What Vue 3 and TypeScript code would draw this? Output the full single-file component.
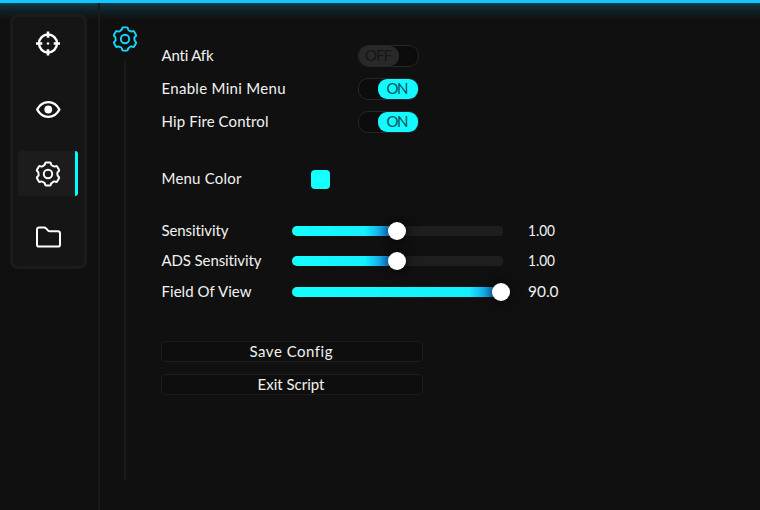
<script setup lang="ts">
import { ref } from 'vue'

interface Toggle { label: string; on: boolean; width: number }
interface Slider { label: string; value: string; fill: number; width: number }

const toggles = ref<Toggle[]>([
  { label: 'Anti Afk', on: false, width: 52 },
  { label: 'Enable Mini Menu', on: true, width: 124 },
  { label: 'Hip Fire Control', on: true, width: 107 },
])
const sliders: Slider[] = [
  { label: 'Sensitivity', value: '1.00', fill: 105.3, width: 67 },
  { label: 'ADS Sensitivity', value: '1.00', fill: 105.3, width: 100 },
  { label: 'Field Of View', value: '90.0', fill: 209, width: 90 },
]
const actions = [
  { label: 'Save Config', width: 83 },
  { label: 'Exit Script', width: 67 },
]

function gearPath(): string {
  const turn = (x: number, y: number, k: number): string => {
    const a = (k * Math.PI) / 3
    return `${(x * Math.cos(a) - y * Math.sin(a)).toFixed(2)} ${(x * Math.sin(a) + y * Math.cos(a)).toFixed(2)}`
  }
  let d = ''
  for (let k = 0; k < 6; k++) {
    const p = (x: number, y: number) => turn(x, y, k)
    d += `${k ? 'L' : 'M'}${p(-3.1, -9.5)}L${p(-2.9, -10.7)}Q${p(-2.8, -11.6)} ${p(-1.9, -11.6)}L${p(1.9, -11.6)}Q${p(2.8, -11.6)} ${p(2.9, -10.7)}L${p(3.1, -9.5)}Q${p(3.5, -8.4)} ${p(4.7, -8.15)}`
  }
  return d + 'Z'
}
const gear = gearPath()
</script>

<template>
  <div class="window">
    <aside class="side">
      <nav class="nav">
        <button class="item">
          <svg viewBox="-13 -12.5 26 26" class="icon">
            <circle r="9" stroke-width="2.4" />
            <path class="ticks" d="M0-12v6.3M0 12V5.7M-12 0h6.3M12 0H5.7" />
            <circle r="1.3" class="solid" />
          </svg>
        </button>
        <button class="item">
          <svg viewBox="-13.3 -13.5 26 26" class="icon eye">
            <path d="M-11.1 0C-6-9.8 6-9.8 11.1 0C6 9.8-6 9.8-11.1 0Z" />
            <circle r="3.9" class="solid" />
          </svg>
        </button>
        <button class="item active">
          <svg viewBox="-13 -13 26 26" class="icon"><path :d="gear" /><circle r="4.2" /></svg>
        </button>
        <button class="item">
          <svg viewBox="-13.5 -13 26 26" class="icon">
            <path d="M-11.5-7.4Q-11.5-9.6-9.3-9.6H-4.5Q-3.2-9.6-2.4-8.7L-.4-6.4Q.2-5.7 1.2-5.7H9.3Q11.5-5.7 11.5-3.5V7.4Q11.5 9.6 9.3 9.6H-9.3Q-11.5 9.6-11.5 7.4Z" />
          </svg>
        </button>
      </nav>
    </aside>
    <div class="section">
      <svg viewBox="-13 -13 26 26" class="icon accent"><path :d="gear" /><circle r="4.2" /></svg>
      <div class="rail"></div>
    </div>
    <main class="content">
      <div class="toggles">
        <div v-for="t in toggles" :key="t.label" class="row toggle-row">
          <svg class="text label"><text x="0.5" y="15" :textLength="t.width">{{ t.label }}</text></svg>
          <button class="switch" :class="{ on: t.on }" @click="t.on = !t.on">
            <svg class="knob"><text x="19.5" y="15.2" text-anchor="middle" :textLength="t.on ? 22 : 27">{{ t.on ? 'ON' : 'OFF' }}</text></svg>
          </button>
        </div>
      </div>
      <div class="row color-row">
        <svg class="text color-label"><text x="0.5" y="14.7" textLength="80">Menu Color</text></svg>
        <div class="swatch"></div>
      </div>
      <div class="sliders">
        <div v-for="s in sliders" :key="s.label" class="row slider-row">
          <svg class="text slider-label"><text x="0.5" y="14.7" :textLength="s.width">{{ s.label }}</text></svg>
          <div class="track">
            <div class="fill" :style="{ width: s.fill + 'px' }"><span class="thumb"></span></div>
          </div>
          <svg class="text value"><text x="0" y="15.3" :textLength="s.value === '90.0' ? 30.5 : 27" lengthAdjust="spacingAndGlyphs">{{ s.value }}</text></svg>
        </div>
      </div>
      <div class="actions">
        <button v-for="a in actions" :key="a.label" class="action">
          <svg class="text action-label"><text x="129" y="14.6" text-anchor="middle" :textLength="a.width">{{ a.label }}</text></svg>
        </button>
      </div>
    </main>
  </div>
</template>

<style>
html, body { margin: 0; background: #101010; overflow: hidden; }
</style>

<style scoped>
* { box-sizing: border-box; }
button { padding: 0; border: 0; background: none; display: block; font: inherit; }
.window {
  width: 760px; height: 510px; display: flex;
  border-top: 3px solid #14c8ff;
  background: linear-gradient(#0d4451 0, #103039 3px, #102024 8px, #101010 17px);
  color: #f2f2f2; font-family: Lato, "Open Sans", sans-serif; font-size: 15px;
  font-variant-ligatures: none;
}
.side { width: 100px; padding: 11px 0 0 10px; border-right: 2px solid #1a1a1a; }
.nav {
  width: 77px; height: 255px; padding: 5px 5px 0; display: flex; flex-direction: column; gap: 19.3px;
  border: 3px solid #1b1b1b; border-radius: 8px; background: #151515;
}
.item { width: 60px; height: 45px; flex: none; display: flex; align-items: center; justify-content: center; border-radius: 3px; }
.item:first-child { padding-bottom: 2px; }
.active { background: #1c1c1c; border-right: 3px solid #0ff; padding: 1px 0 0 3.5px; }
.icon { width: 26px; height: 26px; flex: none; fill: none; stroke: #fff; stroke-width: 2; stroke-linejoin: round; stroke-linecap: round; }
.icon .solid { fill: #fff; stroke: none; }
.icon .ticks { stroke-width: 2.6; stroke-linecap: butt; }
.eye { stroke-width: 2.4; }
.icon.accent { stroke: #14d8ff; stroke-width: 1.9; }
.section { width: 50px; padding-top: 23px; display: flex; flex-direction: column; align-items: center; gap: 9px; }
.rail { width: 2px; height: 419px; background: #1b1b1b; }
.content { padding: 42px 0 0 11px; }
.row { display: flex; align-items: center; }
.text { height: 20px; flex: none; overflow: visible; fill: #f2f2f2; }
.toggles { display: flex; flex-direction: column; gap: 11px; }
.toggle-row { height: 22px; }
.label { width: 197px; }
.switch { width: 61px; height: 22px; border: 1px solid #262626; border-radius: 10px; background: #0c0c0c; display: flex; }
.switch.on { justify-content: flex-end; }
.knob { display: block; width: 40px; height: 20px; border-radius: 9px; background: #292929; fill: #161616; }
.on .knob { background: #14f8ff; fill: #07545b; }
.color-row { height: 20px; margin-top: 36px; }
.color-label { width: 150px; }
.swatch { width: 19px; height: 19px; border-radius: 4px; background: #14ffff; }
.sliders { margin-top: 32.3px; display: flex; flex-direction: column; gap: 10.2px; }
.slider-row { height: 20px; }
.slider-label { width: 131px; }
.track { width: 211px; height: 10px; border-radius: 4px; background: #1e1e1e; }
.fill {
  height: 10px; border-radius: 5px; display: flex; align-items: center; justify-content: flex-end;
  background: linear-gradient(to right, #14ffff, #14f0ff calc(100% - 32px), #1684df calc(100% - 7px));
}
.thumb { width: 18px; height: 18px; flex: none; margin-right: -9px; border-radius: 50%; background: #fff; box-shadow: 0 0 10px 3px rgba(0, 0, 0, .45); }
.value { width: 40px; margin-left: 24.5px; font-size: 14.5px; }
.actions { margin-top: 39.3px; display: flex; flex-direction: column; gap: 12px; }
.action { width: 262px; height: 21px; border: 1px solid #1c1c1c; border-radius: 4px; background: #0e0e0e; }
.action-label { display: block; width: 260px; height: 19px; }
</style>
